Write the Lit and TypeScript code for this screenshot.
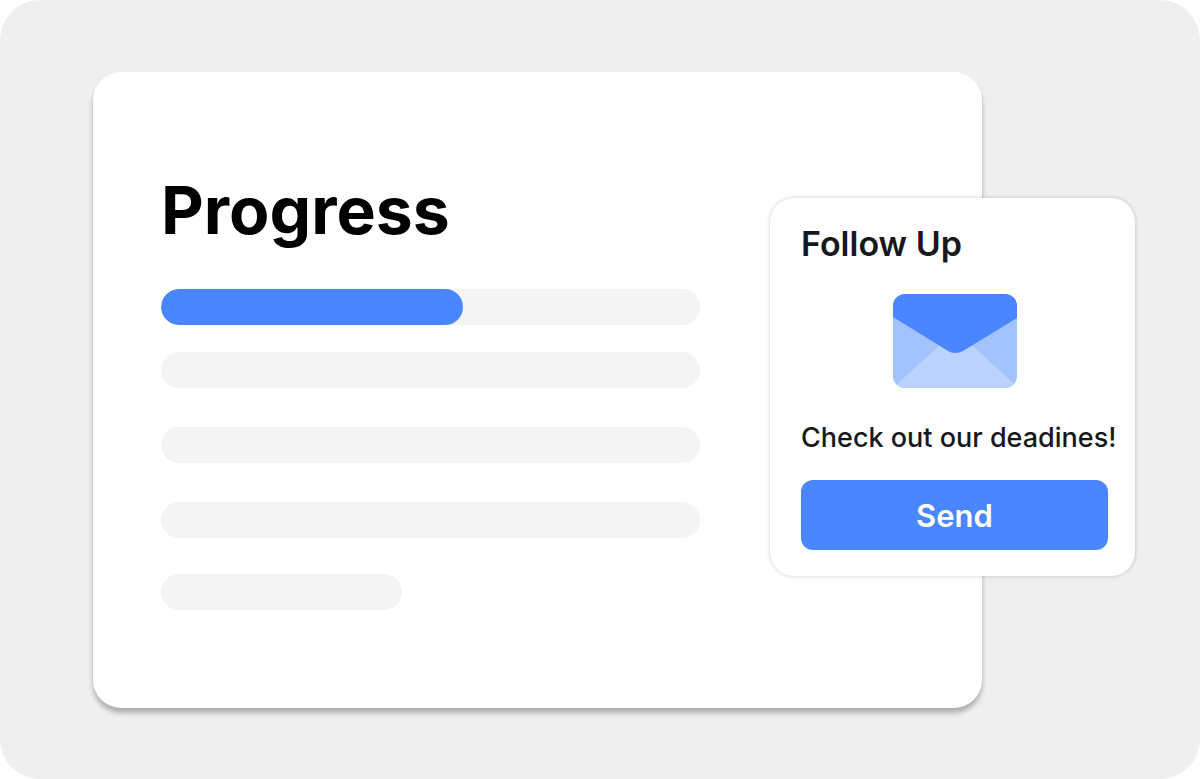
import { LitElement, html, css } from "lit";
import { customElement, property } from "lit/decorators.js";

const fontStack = css`Inter, "Liberation Sans", sans-serif`;

@customElement("progress-card")
class ProgressCard extends LitElement {
  @property({ type: Number }) value = 56;

  static styles = css`
    :host {
      display: block;
      box-sizing: border-box;
      padding: 98px 282px 98px 68px;
      border-radius: 28px;
      background: #fff;
      box-shadow: 0 5px 5px rgba(0, 0, 0, 0.27);
      font-family: ${fontStack};
    }
    .title {
      display: block;
      margin-bottom: 39px;
      color: #000;
      font-size: 66px;
      font-weight: 700;
      line-height: 80px;
    }
    .bar,
    .line {
      display: block;
      width: 100%;
      height: 36px;
      border-radius: 18px;
      background: #f4f4f4;
    }
    .bar {
      appearance: none;
      border: 0;
      overflow: hidden;
      margin-bottom: 27px;
    }
    .bar::-webkit-progress-bar {
      border-radius: 18px;
      background: #f4f4f4;
    }
    .bar::-webkit-progress-value {
      border-radius: 18px;
      background: #4a86ff;
    }
    .bar::-moz-progress-bar {
      border-radius: 18px;
      background: #4a86ff;
    }
    .line + .line {
      margin-top: 39px;
    }
    .line + .short {
      width: 241px;
      margin-top: 36px;
    }
  `;

  render() {
    return html`
      <label class="title" for="progress">Progress</label>
      <progress class="bar" id="progress" max="100" .value=${this.value}></progress>
      <div class="lines">
        <div class="line"></div>
        <div class="line"></div>
        <div class="line"></div>
        <div class="line short"></div>
      </div>
    `;
  }
}

@customElement("follow-up-card")
class FollowUpCard extends LitElement {
  static styles = css`
    :host {
      display: flex;
      flex-direction: column;
      box-sizing: border-box;
      padding: 24px 27px 26px 31px;
      border-radius: 24px;
      background: #fff;
      box-shadow: 0 0 4px rgba(0, 0, 0, 0.2);
      color: #17181a;
      font-family: ${fontStack};
    }
    .title {
      margin: 0 0 28px;
      font-size: 34px;
      font-weight: 600;
      line-height: 44px;
    }
    .envelope {
      display: block;
      align-self: center;
      width: 124px;
      height: 94px;
    }
    .message {
      margin: 32px 0 24px;
      font-size: 27px;
      font-weight: 500;
      line-height: 36px;
      white-space: nowrap;
    }
    .send {
      height: 70px;
      padding: 2px 0 0;
      border: 0;
      border-radius: 12px;
      background: #4a86ff;
      color: #fff;
      font: 600 31px/40px ${fontStack};
      cursor: pointer;
    }
  `;

  render() {
    return html`
      <h2 class="title">Follow Up</h2>
      <svg class="envelope" viewBox="0 0 124 94" aria-hidden="true">
        <defs>
          <clipPath id="body"><rect width="124" height="94" rx="12" /></clipPath>
        </defs>
        <g clip-path="url(#body)">
          <rect width="124" height="94" fill="#a3c3ff" />
          <path d="M3 91 L46 52 H80 L121 90 L118 94 H6Z" fill="#bad3ff" />
          <path d="M0 0 H124 V24 L70 57 Q62 61 55 57 L0 23Z" fill="#4a86ff" />
        </g>
      </svg>
      <p class="message">Check out our deadines!</p>
      <button class="send" type="button">Send</button>
    `;
  }
}

@customElement("app-root")
class AppRoot extends LitElement {
  static styles = css`
    :host {
      display: block;
      background: #fff;
    }
    .stage {
      box-sizing: border-box;
      min-height: 100vh;
      padding: 72px 65px 70px 93px;
      border-radius: 40px;
      background: #efefef;
    }
    .board {
      position: relative;
      padding-right: 153px;
    }
    .popup {
      position: absolute;
      top: 126px;
      right: 0;
      width: 365px;
    }
  `;

  render() {
    return html`
      <main class="stage">
        <div class="board">
          <progress-card></progress-card>
          <follow-up-card class="popup"></follow-up-card>
        </div>
      </main>
    `;
  }
}
